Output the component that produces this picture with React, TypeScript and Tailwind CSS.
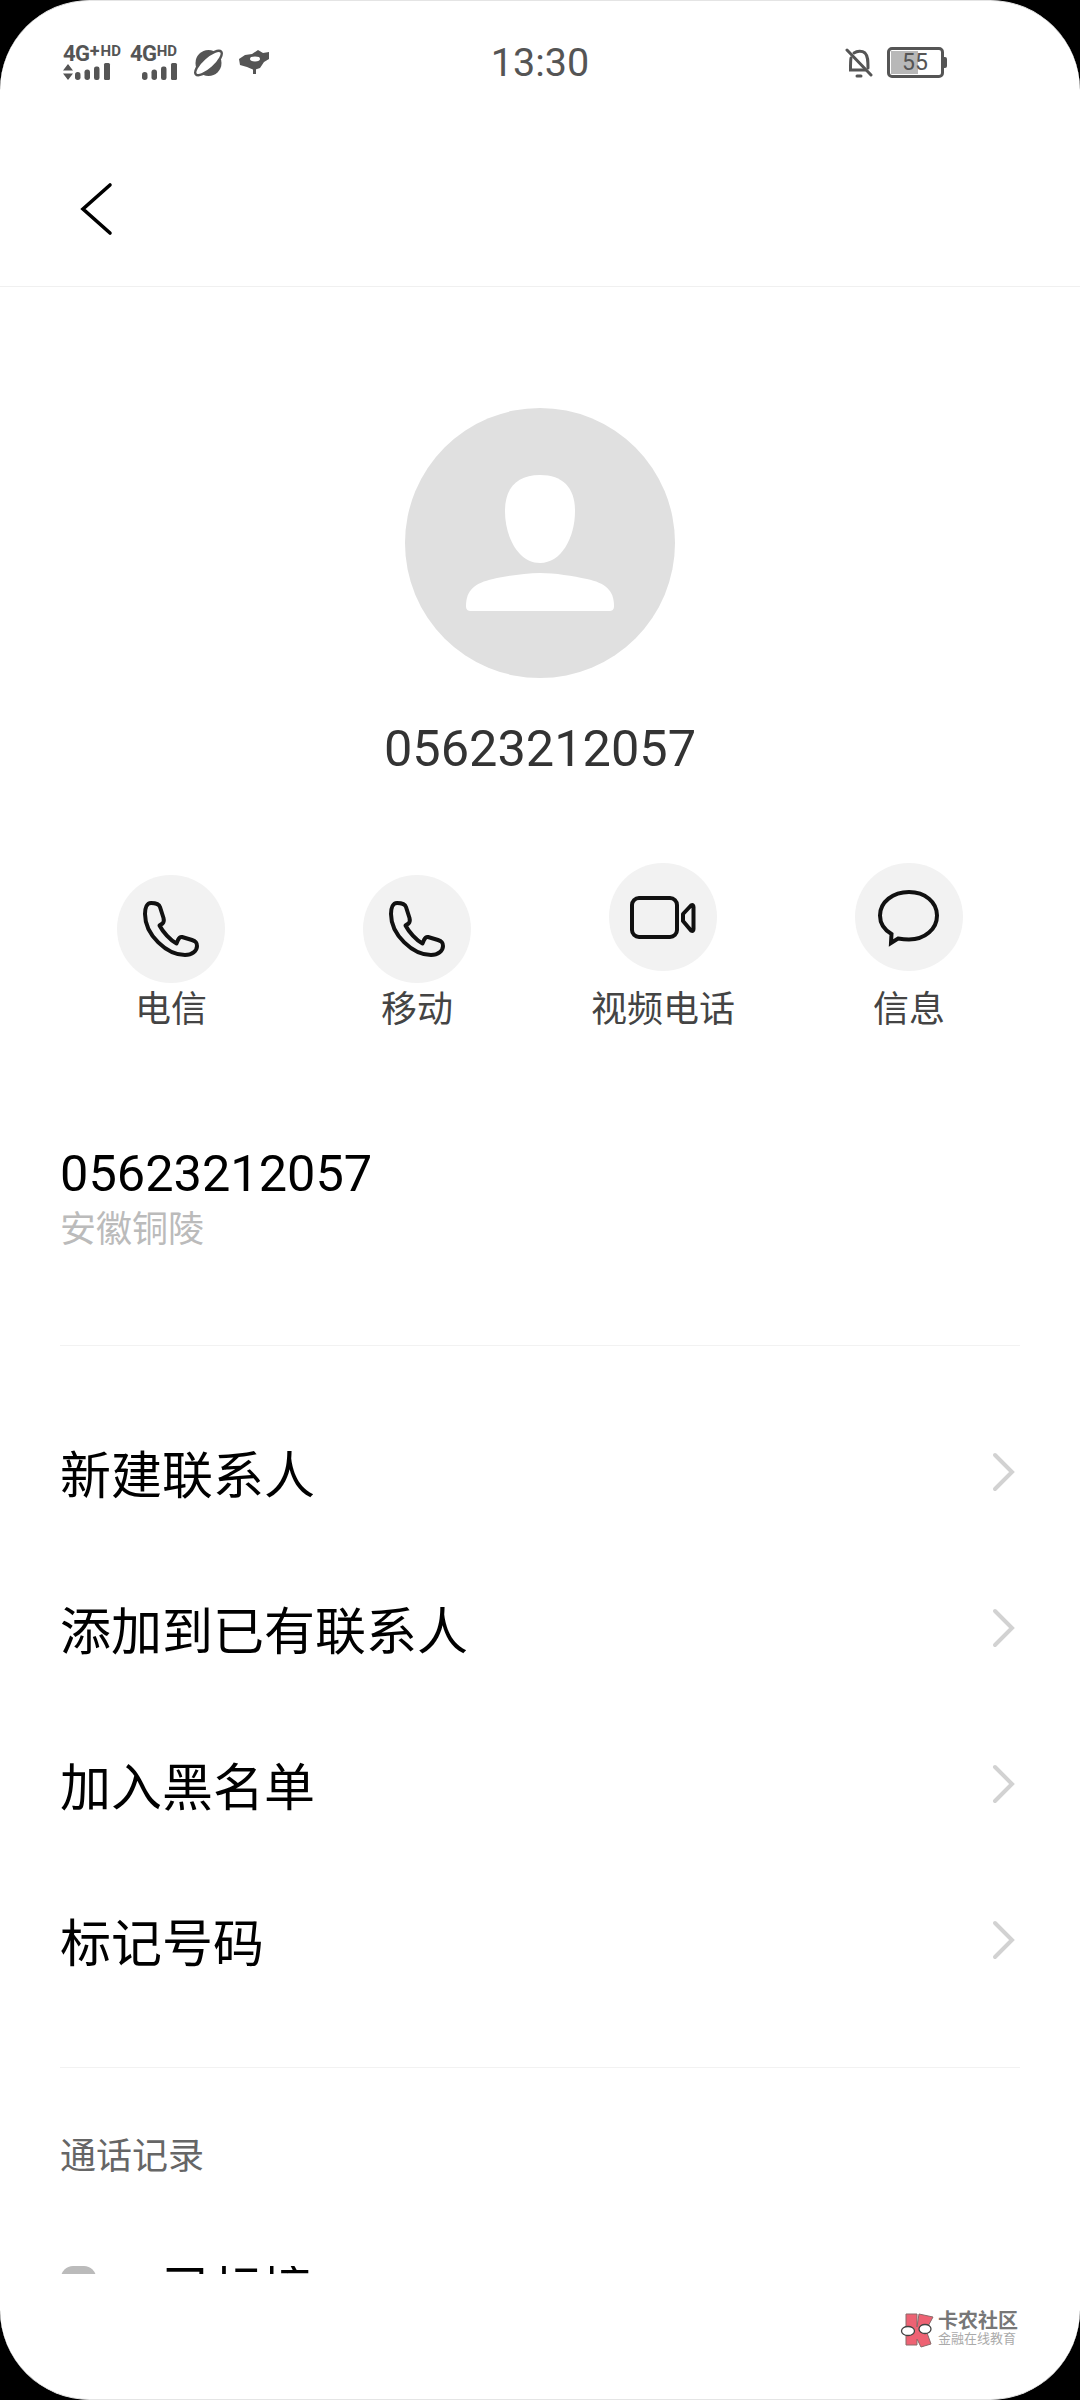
const Bars = ({ className = "" }: { className?: string }) => (
  <svg width="36" height="17" viewBox="0 0 36 17" className={className} fill="#555">
    <rect x="0" y="9" width="5.5" height="8" rx="2.7" />
    <rect x="9.5" y="6.5" width="5.5" height="10.5" rx="2.7" />
    <rect x="19" y="3.5" width="5.5" height="13.5" rx="2.2" />
    <rect x="29" y="0" width="6" height="17" rx="1.5" />
  </svg>
);

const Phone = () => (
  <svg width="108" height="108" viewBox="0 0 108 108" fill="none" stroke="#111" strokeWidth="4" strokeLinejoin="round">
    <path d="M34 28 C30 28 28 33 28 39 C28 60 50 80 68 80 C75 80 80 76 80 71 C80 67 78 66 75 65 L65 62 C63 61.5 62 63 61 65 L59.5 68.5 C53 65 46 57 42.5 50.5 L45.5 48.5 C47 47 47 45 46.5 43 L43 32 C42 29 39 28 34 28 Z" />
  </svg>
);

const Video = () => (
  <svg width="108" height="108" viewBox="0 0 108 108" fill="none" stroke="#111" strokeWidth="4" strokeLinejoin="round">
    <rect x="23" y="35" width="45" height="39" rx="7" />
    <path d="M74 51 L82 42.5 Q84.5 41 84.5 44 V66 Q84.5 69 82 67.5 L74 58 Z" />
  </svg>
);

const Message = () => (
  <svg width="108" height="108" viewBox="0 0 108 108" fill="none" stroke="#111" strokeWidth="4" strokeLinejoin="miter">
    <path d="M36 80 L36.5 71 C28 66 25 59 25 52.5 C25 39 38 29 54 29 C70 29 82 39 82 52.5 C82 66 70 76.5 54 76.5 C50 76.5 46 76 43 75.5 Z" />
  </svg>
);

const Chevron = () => (
  <svg width="24" height="40" viewBox="0 0 24 40" fill="none" stroke="#d2d2d2" strokeWidth="4" strokeLinecap="round" strokeLinejoin="miter">
    <path d="M3 3 L20 20 L3 37" />
  </svg>
);

const actions = [
  { label: "电信", icon: <Phone />, raised: false },
  { label: "移动", icon: <Phone />, raised: false },
  { label: "视频电话", icon: <Video />, raised: true },
  { label: "信息", icon: <Message />, raised: true },
];

const menu = ["新建联系人", "添加到已有联系人", "加入黑名单", "标记号码"];

export default function App() {
  return (
    <div className="w-[1080px] h-[2400px] bg-black font-['Roboto','Noto_Sans_CJK_SC',sans-serif]">
      <div className="h-full flex flex-col bg-white rounded-[90px] overflow-hidden border-y border-[#e4e4e4]">
        {/* status bar */}
        <div className="h-[123px] shrink-0 grid grid-cols-[1fr_auto_1fr] items-center px-[63px]">
          <div className="flex items-center">
            <div className="w-[58px] flex flex-col">
              <div className="flex items-start h-[18px] text-[#555] font-bold">
                <span className="text-[22px] leading-[18px] tracking-[-0.5px]">4G</span>
                <span className="text-[18px] leading-[12px]">+</span>
                <span className="text-[15px] leading-[13px] ml-[1px] tracking-[0.3px]">HD</span>
              </div>
              <div className="flex items-center h-[17px]">
                <svg width="10" height="16" viewBox="0 0 10 16" fill="#555" className="mr-[2px]">
                  <path d="M5 0 L10 6.5 H0 Z M0 9.5 H10 L5 16 Z" />
                </svg>
                <Bars />
              </div>
            </div>
            <div className="w-[48px] ml-[9px] flex flex-col">
              <div className="flex items-start h-[18px] text-[#555] font-bold">
                <span className="text-[22px] leading-[18px] tracking-[-0.5px]">4G</span>
                <span className="text-[15px] leading-[13px]">HD</span>
              </div>
              <div className="flex justify-end h-[17px]">
                <Bars />
              </div>
            </div>
            <svg width="31" height="28" viewBox="0 0 31 28" className="ml-[15px]">
              <ellipse cx="15.5" cy="14" rx="13" ry="13" fill="#555" />
              <g transform="rotate(-42 15.5 14)">
                <ellipse cx="15.5" cy="14" rx="17" ry="6" fill="#fff" />
                <ellipse cx="15.5" cy="14" rx="17" ry="6" fill="none" stroke="#555" strokeWidth="2.4" />
              </g>
            </svg>
            <svg width="30" height="26" viewBox="0 0 30 26" className="ml-[15px]">
              <path d="M0 9 L6 5 L13 4 L19 0 L24 3 L30 2 L30 9 L25 12 L21 18 L15 20 L8 17 L1 15 Z" fill="#555" />
              <ellipse cx="16" cy="9" rx="5" ry="2.4" fill="#fff" />
              <rect x="14" y="19" width="3" height="5" fill="#555" />
            </svg>
          </div>
          <div className="text-[39.5px] leading-none text-[#555]">13:30</div>
          <div className="flex items-center justify-end pr-[70px]">
            <svg width="28" height="30" viewBox="0 0 28 30" fill="none" stroke="#555" strokeWidth="3" strokeLinecap="round">
              <path d="M6 10 C5.5 12 5.5 15 5.5 22 H20" />
              <path d="M9 5 C12 3 17 2.5 20 5 C23 8 23 13 23 20" />
              <path d="M2 2 L26 27" />
              <path d="M12 28 H16" />
            </svg>
            <div className="ml-[14px] flex items-center">
              <div className="w-[57px] h-[31px] rounded-[5px] border-[3px] border-[#555] p-[1px]">
                <div className="h-full bg-[linear-gradient(90deg,#b8b8b8_0_27px,transparent_27px)] flex items-center justify-center pr-[1px] text-[23px] leading-none text-[#555]">
                  55
                </div>
              </div>
              <div className="w-[3px] h-[11px] bg-[#555] rounded-r-[2px]" />
            </div>
          </div>
        </div>

        {/* header */}
        <div className="h-[163px] shrink-0 flex items-center pl-[80px] border-b border-[#f0f0f0] pt-[8px]">
          <svg width="34" height="54" viewBox="0 0 34 54" fill="none" stroke="#000" strokeWidth="3.6" strokeLinecap="round">
            <path d="M30 3 L3 27 L30 51" />
          </svg>
        </div>

        {/* avatar */}
        <div className="mt-[121px] self-center w-[270px] h-[270px] rounded-full bg-[#e0e0e0] shrink-0">
          <svg width="270" height="270" viewBox="0 0 270 270" fill="#fff">
            <path d="M135 67 C158 67 170 80 170 103 C170 130 156 155 135 155 C114 155 100 130 100 103 C100 80 112 67 135 67 Z" />
            <path d="M135 165 C150 165 168 168 182 171 C200 175 209 182 209 198 C209 202 207 203 204 203 H66 C63 203 61 202 61 198 C61 182 70 175 88 171 C102 168 120 165 135 165 Z" />
          </svg>
        </div>
        <div className="mt-[41px] text-center text-[50.5px] leading-[60px] text-[#333] shrink-0">05623212057</div>

        {/* actions */}
        <div className="mt-[84px] px-[48px] grid grid-cols-4 items-start shrink-0">
          {actions.map((a) => (
            <div key={a.label} className={`flex flex-col items-center ${a.raised ? "" : "pt-[12px]"}`}>
              <div className={`w-[108px] h-[108px] rounded-full bg-[#f2f2f2] ${a.raised ? "mb-[12px]" : ""}`}>{a.icon}</div>
              <div className="text-[36px] leading-[54px] text-[#444]">{a.label}</div>
            </div>
          ))}
        </div>

        {/* number */}
        <div className="mt-[107px] px-[60px] text-[50.5px] leading-[60px] text-black shrink-0">05623212057</div>
        <div className="mt-[2px] px-[60px] text-[36px] leading-[48px] text-[#bbbbbb] shrink-0">安徽铜陵</div>

        <div className="mt-[91px] mx-[60px] h-px bg-[#f2f2f2] shrink-0" />

        {/* menu */}
        <div className="mt-[48px] shrink-0">
          {menu.map((m) => (
            <div key={m} className="h-[156px] pl-[60px] pr-[64px] flex items-center justify-between">
              <span className="pt-[10px] text-[51px] leading-[60px] text-black">{m}</span>
              <Chevron />
            </div>
          ))}
        </div>

        <div className="mt-[49px] mx-[60px] h-px bg-[#f2f2f2] shrink-0" />

        <div className="mt-[65px] px-[60px] text-[36px] leading-[48px] text-[#666] shrink-0">通话记录</div>

        {/* clipped list row */}
        <div className="mt-[85px] h-[8px] overflow-hidden pl-[61px] flex shrink-0">
          <div className="w-[35px] h-[40px] rounded-t-[12px] bg-[#bbbbbb] shrink-0" />
          <div className="ml-[66px] text-[50px] leading-[60px] text-black mt-[-6px]">已标接</div>
        </div>

        {/* watermark */}
        <div className="flex-1 flex items-start justify-end pr-[62px] pt-[37px]">
          <svg width="35" height="36" viewBox="0 0 35 36" className="mt-[1px]">
            <path d="M6 2 H17 V15 L19 2 L33 5 L26 18 L31 32 L21 35 L17 27 V33 H6 Z" fill="#ee6273" stroke="#8a6a6a" strokeWidth="1" />
            <ellipse cx="8" cy="19" rx="6.5" ry="4.5" fill="#fff" stroke="#444" strokeWidth="1.3" />
            <ellipse cx="25" cy="17" rx="6" ry="4.5" fill="#fff" stroke="#444" strokeWidth="1.3" />
          </svg>
          <div className="ml-[3px] flex flex-col items-start">
            <div className="text-[20px] leading-[20px] font-bold text-[#777]">卡农社区</div>
            <div className="mt-[1px] text-[13px] leading-[14px] text-[#aaaaaa]">金融在线教育</div>
          </div>
        </div>
      </div>
    </div>
  );
}
